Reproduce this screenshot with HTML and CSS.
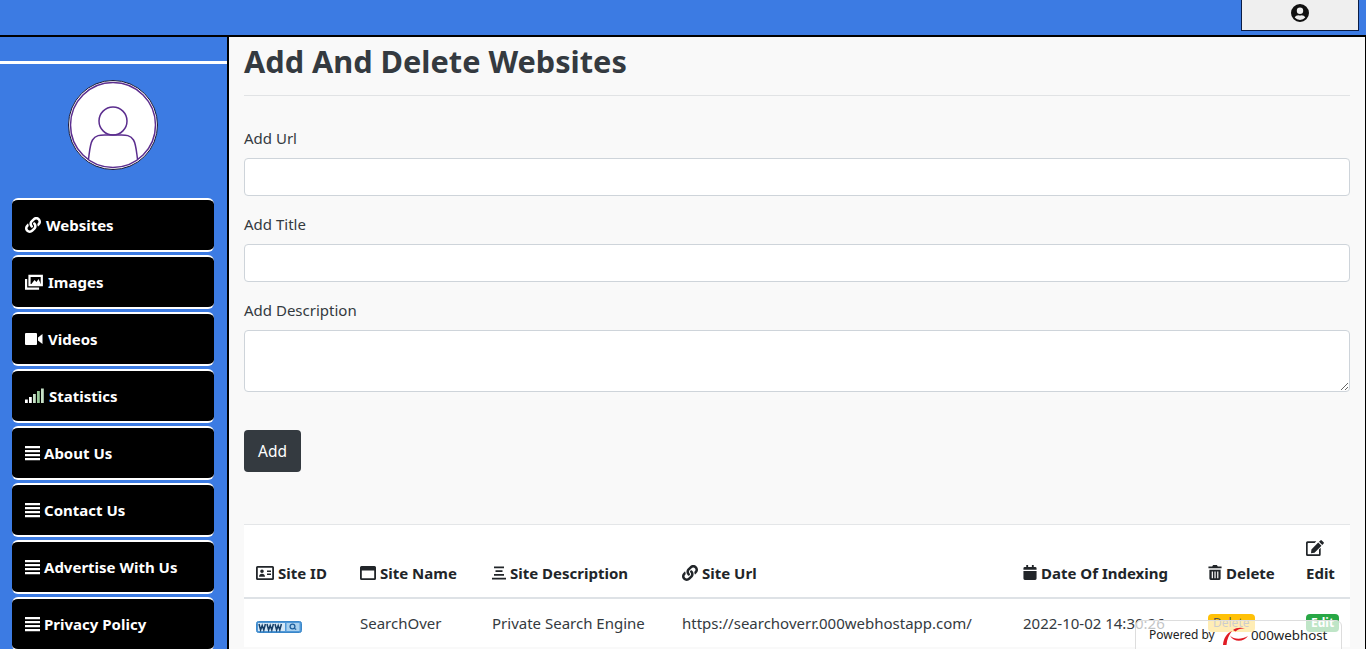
FILE: index.html
```html
<!DOCTYPE html>
<html lang="en">
<head>
<meta charset="utf-8">
<title>Add And Delete Websites</title>
<link rel="stylesheet" href="styles.css">
</head>
<body>
<svg class="defs" aria-hidden="true"><defs><symbol id="link" viewBox="0 0 512 512"><path d="M326.612 185.391c59.747 59.809 58.927 155.698.36 214.59-.11.12-.24.25-.36.37l-67.2 67.2c-59.27 59.27-155.699 59.262-214.96 0-59.27-59.26-59.27-155.7 0-214.96l37.106-37.106c9.84-9.84 26.786-3.3 27.294 10.606.648 17.722 3.826 35.527 9.69 52.721 1.986 5.822.567 12.262-3.783 16.612l-13.087 13.087c-28.026 28.026-28.905 73.66-1.155 101.96 28.024 28.579 74.086 28.749 102.325.51l67.2-67.19c28.191-28.191 28.073-73.757 0-101.83-3.701-3.694-7.429-6.564-10.341-8.569a16.037 16.037 0 0 1-6.947-12.606c-.396-10.567 3.348-21.456 11.698-29.806l21.054-21.055c5.521-5.521 14.182-6.199 20.584-1.731a152.482 152.482 0 0 1 20.522 17.197zM467.547 44.449c-59.261-59.262-155.69-59.27-214.96 0l-67.2 67.2c-.12.12-.25.25-.36.37-58.566 58.892-59.387 154.781.36 214.59a152.454 152.454 0 0 0 20.521 17.196c6.402 4.468 15.064 3.789 20.584-1.731l21.054-21.055c8.35-8.35 12.094-19.239 11.698-29.806a16.037 16.037 0 0 0-6.947-12.606c-2.912-2.005-6.64-4.875-10.341-8.569-28.073-28.073-28.191-73.639 0-101.83l67.2-67.19c28.239-28.239 74.3-28.069 102.325.51 27.75 28.3 26.872 73.934-1.155 101.96l-13.087 13.087c-4.35 4.35-5.769 10.79-3.783 16.612 5.864 17.194 9.042 34.999 9.69 52.721.509 13.906 17.454 20.446 27.294 10.606l37.106-37.106c59.271-59.259 59.271-155.699.001-214.959z"/></symbol><symbol id="bars" viewBox="0 0 15 16"><path d="M0 1h15v2.200H0zM0 5h15v2.200H0zM0 9h15v2.200H0zM0 13h15v2.200H0z"/></symbol></defs></svg>
<header class="topbar">
  <button class="account" type="button" aria-label="Account">
    <svg class="account-icon" viewBox="1 1 18 18"><path fill-rule="evenodd" d="M10 1a9 9 0 1 0 0 18 9 9 0 0 0 0-18zm0 3.600a3.200 3.200 0 1 1 0 6.400 3.200 3.200 0 0 1 0-6.400zm0 12.400a7 7 0 0 1-5.300-2.500c.8-1.500 2.200-2.300 3.700-2.300.5 0 .9.3 1.600.3s1.100-.3 1.600-.3c1.500 0 2.900.8 3.700 2.300A7 7 0 0 1 10 17z"/></svg>
  </button>
</header>
<div class="shell">
  <aside class="sidebar">
    <div class="side-rule"></div>
    <div class="avatar">
      <svg viewBox="0 0 88 88"><circle cx="44" cy="44" r="42.500" fill="#fff" stroke="#5b2d8e" stroke-width="1.500"/><circle cx="44" cy="40" r="14" fill="none" stroke="#5b2d8e" stroke-width="1.500"/><path d="M19.500 78c1-7 1.500-15 4-19 3-5 8-5 12-5h17c4 0 9 0 12 5 2.500 4 3 12 4 19" fill="none" stroke="#5b2d8e" stroke-width="1.500"/></svg>
    </div>
    <nav class="side-nav">
      <a class="side-link"><svg class="ni"><use href="#link"/></svg>Websites</a>
      <a class="side-link"><svg class="ni ni-w" viewBox="0 0 18 16"><path d="M4.500 1.800h12.300v9.400H4.500z" fill="none" stroke="#fff" stroke-width="2.200"/><path d="M6 10.500l3.500-4.500 2 2 2-3 2.500 5.500z" fill="#fff"/><path d="M1.100 5v9.700h13" fill="none" stroke="#fff" stroke-width="2.200"/></svg>Images</a>
      <a class="side-link"><svg class="ni ni-w" viewBox="0 0 18 16"><rect x="0" y="2" width="12" height="12" rx="1" fill="#fff"/><path d="M13 6.500 17.500 3v10L13 9.500z" fill="#fff"/></svg>Videos</a>
      <a class="side-link"><svg class="ni ni-s" viewBox="0 0 19 16"><path d="M0 11.500h2.800V15H0z" fill="#fff"/><path d="M4 9h2.800v6H4z" fill="#fff"/><path d="M8 6h2.800v9H8z" fill="#c6e0c6"/><path d="M12 3h2.800v12H12z" fill="#9acb9a"/><path d="M16 .5h2.800V15H16z" fill="#c6e0c6"/></svg>Statistics</a>
      <a class="side-link"><svg class="ni ni-b"><use href="#bars"/></svg>About Us</a>
      <a class="side-link"><svg class="ni ni-b"><use href="#bars"/></svg>Contact Us</a>
      <a class="side-link"><svg class="ni ni-b"><use href="#bars"/></svg>Advertise With Us</a>
      <a class="side-link"><svg class="ni ni-b"><use href="#bars"/></svg>Privacy Policy</a>
    </nav>
  </aside>
  <main class="main">
    <h1 class="title">Add And Delete Websites</h1>
    <hr class="rule">
    <form class="form">
      <label class="field"><span class="field-label">Add Url</span><input class="control" type="text"></label>
      <label class="field"><span class="field-label">Add Title</span><input class="control" type="text"></label>
      <label class="field"><span class="field-label">Add Description</span><textarea class="control area"></textarea></label>
      <button class="add" type="button">Add</button>
    </form>
    <table class="table">
      <thead>
        <tr>
          <th class="c-id"><svg class="ti ti-w" viewBox="0 0 18 14"><path fill-rule="evenodd" d="M1.500 0h15A1.500 1.500 0 0 1 18 1.500v11a1.500 1.500 0 0 1-1.500 1.500h-15A1.500 1.500 0 0 1 0 12.500v-11A1.500 1.500 0 0 1 1.500 0zM1.800 1.800v10.400h14.400V1.800zM6 3.500a1.800 1.800 0 1 1 0 3.600 1.800 1.800 0 0 1 0-3.600zM3 10.800c0-2 1.300-3 3-3s3 1 3 3zM11 4.500h4V6h-4zM11 7.500h4V9h-4z"/></svg>Site ID</th>
          <th class="c-name"><svg class="ti" viewBox="0 0 16 14"><path fill-rule="evenodd" d="M1.500 0h13A1.500 1.500 0 0 1 16 1.500v11a1.500 1.500 0 0 1-1.500 1.500h-13A1.500 1.500 0 0 1 0 12.500v-11A1.500 1.500 0 0 1 1.500 0zM1.800 4.500v7.700h12.400V4.500z"/></svg>Site Name</th>
          <th class="c-desc"><svg class="ti ti-c" viewBox="0 0 14 14"><path d="M2 .5h10v1.700H2zM3.500 4.300h7V6h-7zM2 8h10v1.700H2zM0 11.800h14v1.700H0z"/></svg>Site Description</th>
          <th class="c-url"><svg class="ti ti-l"><use href="#link"/></svg>Site Url</th>
          <th class="c-date"><svg class="ti ti-n" viewBox="0 0 14 16"><path d="M3 0h2v2h4V0h2v2h1.500A1.500 1.500 0 0 1 14 3.500V5H0V3.500A1.500 1.500 0 0 1 1.500 2H3zM0 6.500h14v8a1.500 1.500 0 0 1-1.500 1.500h-11A1.500 1.500 0 0 1 0 14.500z"/></svg>Date Of Indexing</th>
          <th class="c-del"><svg class="ti ti-n" viewBox="0 0 14 16"><path fill-rule="evenodd" d="M5 0h4l1 1.500h4V3.500H0V1.500h4zM1 5h12v9.500a1.500 1.500 0 0 1-1.500 1.500h-9A1.500 1.500 0 0 1 1 14.500zM3.500 7v7h1.300V7zM6.400 7v7h1.300V7zM9.300 7v7h1.300V7z"/></svg>Delete</th>
          <th class="c-edit"><svg class="ti-edit" viewBox="0 0 18 16"><path d="M15.800.4l1.800 1.800a1 1 0 0 1 0 1.400L16.300 5 13 1.700 14.400.4a1 1 0 0 1 1.400 0zM12.200 2.500l3.300 3.300-7 7-3.500.4.400-3.600z"/><path d="M13 9.500v4.300a.5.5 0 0 1-.5.500H2.200a.5.5 0 0 1-.5-.5V3.500a.5.500 0 0 1 .5-.5h6.500L10.300 1.300H1.500A1.500 1.500 0 0 0 0 2.800v11.700A1.500 1.500 0 0 0 1.500 16h11.700a1.500 1.500 0 0 0 1.500-1.500V7.800z"/></svg><br>Edit</th>
        </tr>
      </thead>
      <tbody>
        <tr>
          <td><svg class="www" viewBox="0 0 46 12"><rect x=".5" y=".5" width="45" height="11" rx="2" fill="#4f98d8" stroke="#3a86c8"/><rect x="2" y="2" width="27" height="8" fill="#d5e8f7"/><rect x="30.500" y="2" width="13" height="8" fill="#a9d0ee"/><circle cx="36.500" cy="5.500" r="2.400" fill="none" stroke="#1f5f9c" stroke-width="1.300"/><path d="M38.200 7.200l2 1.300" stroke="#1f5f9c" stroke-width="1.300"/><path d="M3 3l1.600 6 1.600-4.500L7.800 9l1.600-6M11 3l1.600 6 1.600-4.500 1.600 4.500 1.600-6M19 3l1.600 6 1.600-4.500 1.600 4.500 1.600-6" fill="none" stroke="#173f68" stroke-width="1.500"/></svg></td>
          <td>SearchOver</td>
          <td>Private Search Engine</td>
          <td>https://searchoverr.000webhostapp.com/</td>
          <td>2022-10-02 14:30:26</td>
          <td><span class="badge badge-del">Delete</span></td>
          <td><span class="badge badge-edit">Edit</span></td>
        </tr>
      </tbody>
    </table>
  </main>
</div>
<div class="powered">
  <span class="wh-by">Powered by</span>
  <svg class="wh-logo" viewBox="0 0 28 18"><path d="M1 18C1.500 11 5 6 10 4 7 8 5 12 4.500 18z" fill="#e01b24"/><path d="M8 8.500c4 4 11 4.500 18 .5-4 6-14 7-18-.5z" fill="#e01b24"/><path d="M11 3c3-2.500 8-3 12-1.500-4-.5-7 .5-9.500 3z" fill="#e01b24"/></svg>
  <span class="wh-name">000webhost</span>
</div>
</body>
</html>
```
FILE: styles.css
```css
* { box-sizing: border-box; }
html, body { margin: 0; height: 649px; overflow: hidden; }
body { background: #3c7be3; font-family: "Noto Sans", "Open Sans", sans-serif; color: #212529; font-size: 15px; }
.defs { position: absolute; width: 0; height: 0; }

.topbar { height: 35px; background: #3c7be3; display: flex; justify-content: flex-end; padding-right: 7px; align-items: flex-start; }
.account { width: 118px; height: 31px; background: #efefef; border: 1px solid #0b1c45; border-top: 0; display: flex; align-items: center; justify-content: center; padding: 0 0 4px 0; margin: 0; }
.account-icon { width: 18px; height: 18px; fill: #111; }

.shell { display: flex; height: 614px; border-top: 2px solid #000; }
.sidebar { width: 229px; flex: none; background: #3c7be3; border-right: 2px solid #000; padding-top: 24px; overflow: hidden; }
.side-rule { height: 3px; background: #fff; }
.avatar { width: 90px; height: 90px; margin: 16px 0 0 68px; background: #fff; border: 1px solid #1b1b3a; border-radius: 50%; }
.avatar svg { display: block; width: 88px; height: 88px; }
.side-nav { display: flex; flex-direction: column; gap: 3px; margin: 28px 13px 0 12px; }
.side-link { display: flex; align-items: center; height: 54px; flex: none; background: #000; border: solid #fff; border-width: 2px 0; border-radius: 6px; color: #fff; font-weight: 700; font-size: 15px; padding: 0 0 1px 13px; }
.ni { width: 16px; height: 16px; margin-right: 5px; flex: none; fill: #fff; }
.ni-w { width: 18px; }
.ni-s { width: 19px; }
.ni-b { width: 15px; margin-right: 4px; }

.main { flex: 1; min-width: 0; background: #f9f9f9; padding: 0 15px; border-right: 1px solid #000; overflow: hidden; }
.title { margin: 0; font-size: 30.700px; line-height: 48px; font-weight: 700; color: #343a40; }
.rule { border: 0; border-top: 1px solid #e1e3e5; margin: 10px 0 0; }
.form { display: flex; flex-direction: column; margin-top: 30px; }
.field { display: flex; flex-direction: column; margin-bottom: 16px; }
.field-label { font-size: 15px; line-height: 24px; margin-bottom: 8px; color: #343a40; }
.control { height: 38px; background: #fff; border: 1px solid #ced4da; border-radius: 4px; display: block; width: 100%; font: inherit; margin: 0; }
.area { height: 62px; resize: vertical; }
.add { align-self: flex-start; width: 57px; height: 42px; margin-top: 22px; background: #343a40; color: #fff; border: 0; border-radius: 4px; font: inherit; font-size: 15.500px; }

.table { width: 100%; border-collapse: collapse; background: #fff; margin-top: 52px; border-top: 1px solid #e4e6e8; table-layout: fixed; }
.table th { text-align: left; vertical-align: bottom; font-size: 15px; line-height: 24px; font-weight: 700; padding: 12px; border-bottom: 2px solid #dee2e6; white-space: nowrap; color: #212529; }
.table td { font-size: 15px; line-height: 24px; padding: 12px; color: #343a40; white-space: nowrap; vertical-align: top; }
.c-id { width: 104px; }
.c-name { width: 132px; }
.c-desc { width: 190px; }
.c-url { width: 341px; }
.c-date { width: 185px; }
.c-del { width: 98px; }
.c-edit { width: 56px; }
.ti { width: 16px; height: 14px; margin-right: 4px; vertical-align: -1px; fill: #212529; }
.ti-w { width: 18px; }
.ti-c { width: 14px; }
.ti-l { width: 16px; height: 16px; vertical-align: -2px; }
.ti-n { width: 14px; height: 15px; }
.ti-edit { width: 18px; height: 16px; fill: #212529; vertical-align: -1px; }
.www { display: block; width: 46px; height: 12px; margin-top: 10px; }
.badge { display: inline-block; font-size: 12px; font-weight: 400; line-height: 18px; padding: 0 5px; border-radius: 4px; margin-top: 3px; vertical-align: top; }
.badge-del { background: #ffc107; color: #555; }
.badge-edit { background: #28a745; color: #fff; font-weight: 700; }

.powered { position: absolute; left: 1135px; top: 620px; width: 207px; height: 40px; background: rgba(255,255,255,.7); border: 1px solid #ddd; border-radius: 6px; padding: 3px 0 0 13px; display: flex; align-items: flex-start; font-size: 12px; line-height: 22px; color: #222; }
.wh-by { white-space: nowrap; width: 73px; }
.wh-logo { width: 28px; height: 18px; margin-top: 3px; flex: none; }
.wh-name { font-size: 13.300px; margin-left: 1px; }
```
